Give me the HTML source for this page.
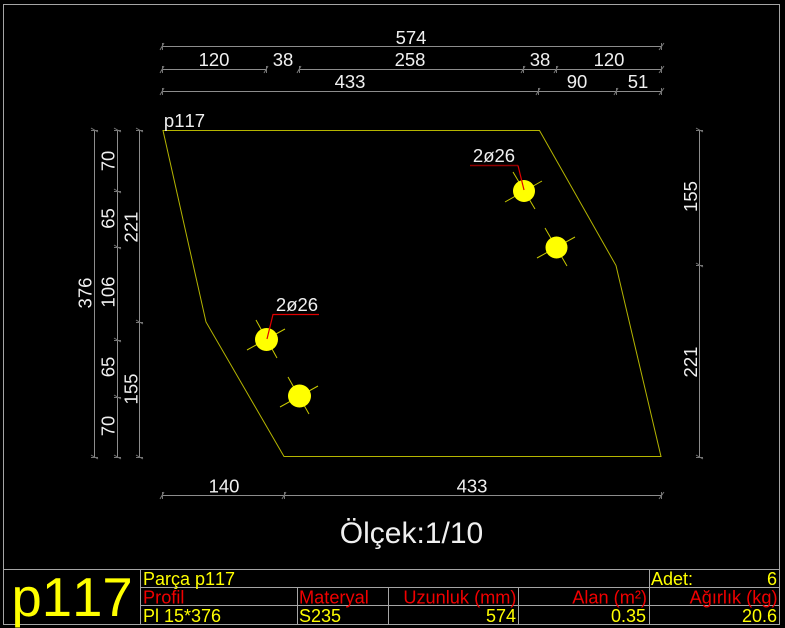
<!DOCTYPE html>
<html><head><meta charset="utf-8"><style>
html,body{margin:0;padding:0;background:#000;width:785px;height:628px;overflow:hidden}
svg{display:block}
text{font-family:"Liberation Sans",sans-serif;font-kerning:none}
</style></head><body>
<svg width="785" height="628" viewBox="0 0 785 628" xmlns="http://www.w3.org/2000/svg">
<rect width="785" height="628" fill="#000"/>
<g fill="none" stroke="#a5a5a5" stroke-width="1">
<path d="M3.500 4.500H779.500V624.500H3.500Z"/>
<path d="M3.500 569.500H779.500M140.500 587.500H779.500M140.500 605.500H779.500M140.500 569.500V624.500M297.500 587.500V624.500M388.500 587.500V624.500M518.500 587.500V624.500M649.500 569.500V624.500"/>
</g>
<g fill="none" stroke="#8c8c8c" stroke-width="1">
<path d="M162 46.500H661M162 69.500H266M299 69.500H661M162 91.500H661M162 495.500H661"/>
<path d="M94.500 130V457M117.500 130V457M139.500 130V457M699.500 130V457"/>
</g>
<g fill="none" stroke="#777" stroke-width="1">
<path d="M160 50L164 43M162.500 43V50M659 50L664 43M661.500 43V50"/>
<path d="M160 73L164 66M162.500 66V73M264 73L268 66M266.500 66V73M297 73L301 66M299.500 66V73M521 73L525 66M523.500 66V73M554 73L558 66M556.500 66V73M659 73L664 66M661.500 66V73"/>
<path d="M160 95L164 88M162.500 88V95M536 95L540 88M538.500 88V95M614 95L618 88M616.500 88V95M659 95L664 88M661.500 88V95"/>
<path d="M160 499L164 492M162.500 492V499M282 499L286 492M284.500 492V499M659 499L664 492M661.500 492V499"/>
<path d="M91 128L98 132M91 130.500H98M91 455L98 459M91 457.500H98"/>
<path d="M114 128L121 132M114 130.500H121M114 189L121 193M114 191.500H121M114 245L121 249M114 247.500H121M114 338L121 342M114 340.500H121M114 395L121 399M114 397.500H121M114 455L121 459M114 457.500H121"/>
<path d="M136 128L143 132M136 130.500H143M136 320L143 324M136 322.500H143M136 455L143 459M136 457.500H143"/>
<path d="M696 128L703 132M696 130.500H703M696 263L703 267M696 265.500H703M696 455L703 459M696 457.500H703"/>
</g>
<path d="M163 130.500H539.500L616 265.500L661 456.500H284L206 322Z" fill="none" stroke="#b5b500" stroke-width="1"/>
<g stroke="#c8c800" stroke-width="1" fill="none">
<path d="M256 320L277 358M247 350L285 329"/>
<path d="M288 377L309 414M280 407L318 386"/>
<path d="M513 172L535 209M505 202L542 181"/>
<path d="M545 228L567 266M537 258L575 237"/>
</g>
<circle cx="266.500" cy="339.500" r="11.500" fill="#ff0"/><circle cx="299.500" cy="396" r="11.500" fill="#ff0"/>
<circle cx="524" cy="191" r="11" fill="#ff0"/><circle cx="556.500" cy="247.500" r="11" fill="#ff0"/>
<g fill="none">
<path d="M319 314.500H273L267 339" stroke="#e00000" stroke-width="1.200"/>
<path d="M470 165.500H518" stroke="#900000" stroke-width="1.600"/>
<path d="M518 165.500L524 190" stroke="#e00000" stroke-width="1.200"/>
</g>
<g fill="#f0f0f0" font-size="18.500" text-anchor="middle">
<text x="411" y="44">574</text>
<text x="214" y="66">120</text><text x="283" y="66">38</text><text x="410" y="66">258</text><text x="540" y="66">38</text><text x="609" y="66">120</text>
<text x="350" y="88">433</text><text x="577" y="88">90</text><text x="638" y="88">51</text>
<text x="224" y="492.500">140</text><text x="472" y="492.500">433</text>
<text x="184.500" y="127">p117</text>
<text x="297" y="311">2ø26</text><text x="494" y="162">2ø26</text>
<text transform="translate(91.500 293) rotate(-90)">376</text>
<text transform="translate(114.500 161) rotate(-90)">70</text>
<text transform="translate(114.500 218.500) rotate(-90)">65</text>
<text transform="translate(114.500 292) rotate(-90)">106</text>
<text transform="translate(114.500 367) rotate(-90)">65</text>
<text transform="translate(114.500 426) rotate(-90)">70</text>
<text transform="translate(137.500 227) rotate(-90)">221</text>
<text transform="translate(137.500 389) rotate(-90)">155</text>
<text transform="translate(697 196.500) rotate(-90)">155</text>
<text transform="translate(697 362) rotate(-90)">221</text>
</g>
<text x="411.500" y="543" fill="#f0f0f0" font-size="30" text-anchor="middle">Ölçek:1/10</text>
<text x="11.500" y="616" fill="#ff0" font-size="54.500">p117</text>
<g fill="#ff0" font-size="18">
<text x="143" y="585">Parça p117</text>
<text x="651" y="585">Adet:</text>
<text x="777" y="585" text-anchor="end">6</text>
<text x="143" y="622">Pl 15*376</text>
<text x="299" y="622">S235</text>
<text x="516" y="622" text-anchor="end">574</text>
<text x="646" y="622" text-anchor="end">0.35</text>
<text x="777" y="622" text-anchor="end">20.6</text>
</g>
<g fill="#f00000" font-size="18.200">
<text x="143" y="603.500">Profil</text>
<text x="299" y="603.500">Materyal</text>
<text x="516.500" y="603.500" text-anchor="end">Uzunluk (mm)</text>
<text x="647" y="603.500" text-anchor="end">Alan (m²)</text>
<text x="777.500" y="603.500" text-anchor="end">Ağırlık (kg)</text>
</g>
</svg>
</body></html>
